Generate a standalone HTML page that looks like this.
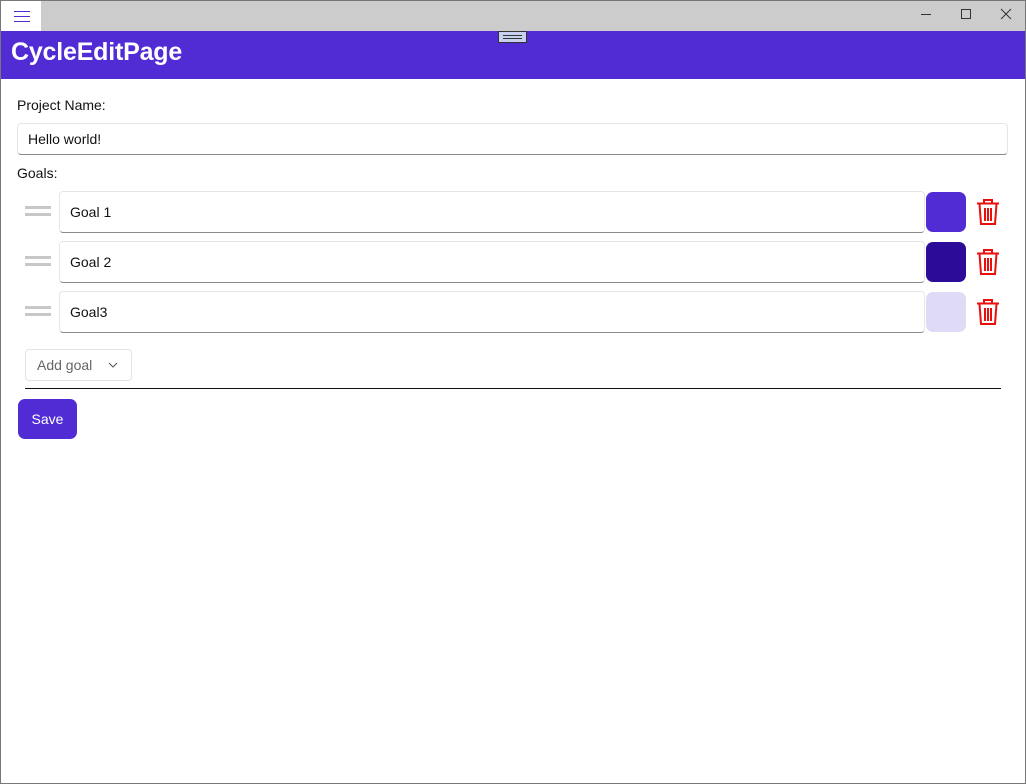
<!DOCTYPE html>
<html><head><style>
*{box-sizing:border-box;margin:0;padding:0}
body{width:1026px;height:784px;position:relative;background:#fff;font-family:"Segoe UI","Liberation Sans",sans-serif;overflow:hidden}
.abs{position:absolute}
.frame{left:0;top:0;width:1026px;height:784px;border:1px solid #777;pointer-events:none}
.tb{left:0;top:0;width:1026px;height:31px;background:#cccccc}
.ham{left:1px;top:1px;width:40px;height:30px;background:#fff}
.hdr{left:1px;top:31px;width:1024px;height:48px;background:#512bd4;color:#fff;font-size:25px;font-weight:bold;padding:7px 0 0 10px;letter-spacing:-0.2px}
.lbl{font-size:14px;color:#111}
.inp{background:#fff;border:1px solid #e6e6e6;border-bottom:1px solid #8a8a8a;border-radius:4px;font-size:14px;color:#111;padding-left:10px;display:flex;align-items:center}
.drag{left:25px;width:26px;height:10px;border-top:3px solid #c8c8c8;border-bottom:3px solid #c8c8c8}
.sw{left:926px;width:40px;height:40px;border-radius:7px}
</style></head><body>
<div class="abs tb"></div>
<div class="abs ham"><svg width="40" height="30"><g stroke="#512bd4" stroke-width="1"><line x1="13" y1="10.5" x2="29" y2="10.5"/><line x1="13" y1="15.5" x2="29" y2="15.5"/><line x1="13" y1="20.5" x2="29" y2="20.5"/></g></svg></div>
<svg class="abs" style="left:915px;top:0" width="110" height="30"><g stroke="#333" stroke-width="1" fill="none"><line x1="6" y1="14.5" x2="16" y2="14.5"/><rect x="46.5" y="9.5" width="9" height="9"/><line x1="86" y1="9" x2="96" y2="19"/><line x1="96" y1="9" x2="86" y2="19"/></g></svg>
<div class="abs hdr">CycleEditPage</div>
<div class="abs" style="left:498px;top:31px;width:29px;height:12px;background:#c8d0f0;border:1px solid #333"><div style="margin:3px 4px;height:4px;border-top:1px solid #333;border-bottom:1px solid #333"></div></div>
<div class="abs lbl" style="left:17px;top:97px">Project Name:</div>
<div class="abs inp" style="left:17px;top:123px;width:991px;height:32px">Hello world!</div>
<div class="abs lbl" style="left:17px;top:165px">Goals:</div>

<div class="abs drag" style="top:206px"></div>
<div class="abs inp" style="left:59px;top:191px;width:866px;height:42px">Goal 1</div>
<div class="abs sw" style="top:192px;background:#512bd4"></div>
<div class="abs drag" style="top:256px"></div>
<div class="abs inp" style="left:59px;top:241px;width:866px;height:42px">Goal 2</div>
<div class="abs sw" style="top:242px;background:#2b0b98"></div>
<div class="abs drag" style="top:306px"></div>
<div class="abs inp" style="left:59px;top:291px;width:866px;height:42px">Goal3</div>
<div class="abs sw" style="top:292px;background:#dfdaf6"></div>

<svg class="abs" style="left:976px;top:198px" width="24" height="130"><g stroke="#e8100c" stroke-width="2" fill="none">
<path d="M1 5.5h22M8 5V2h8v3M3.5 6l1.5 20h14l1.5-20M9 10v13M12 10v13M15 10v13"/>
<g transform="translate(0,50)"><path d="M1 5.5h22M8 5V2h8v3M3.5 6l1.5 20h14l1.5-20M9 10v13M12 10v13M15 10v13"/></g>
<g transform="translate(0,100)"><path d="M1 5.5h22M8 5V2h8v3M3.5 6l1.5 20h14l1.5-20M9 10v13M12 10v13M15 10v13"/></g>
</g></svg>

<div class="abs" style="left:25px;top:349px;width:107px;height:32px;border:1px solid #e3e3e3;border-radius:4px;font-size:14px;color:#666;padding:7px 0 0 11px">Add goal</div>
<svg class="abs" style="left:108px;top:362px" width="10" height="6"><path d="M1 1l4 4 4-4" stroke="#555" fill="none"/></svg>
<div class="abs" style="left:25px;top:388px;width:976px;height:1px;background:#111"></div>
<div class="abs" style="left:18px;top:399px;width:59px;height:40px;background:#512bd4;border-radius:7px;color:#fff;font-size:14px;text-align:center;line-height:41px">Save</div>
<div class="abs frame"></div>
</body></html>
